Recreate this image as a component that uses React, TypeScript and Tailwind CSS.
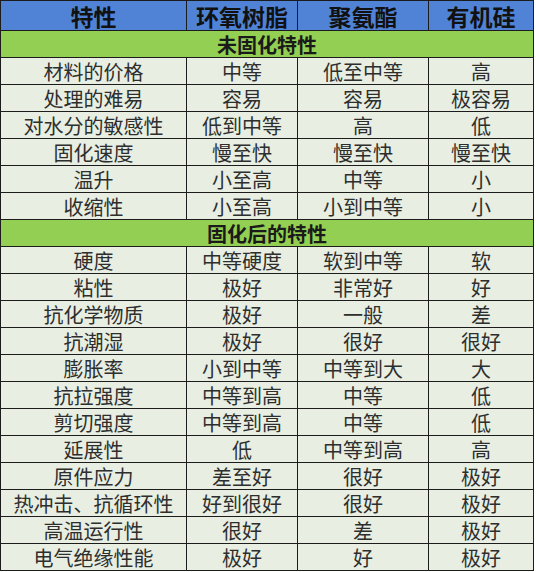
import React from 'react';

type Row = [string, string, string, string];

const uncured: Row[] = [
  ['材料的价格', '中等', '低至中等', '高'],
  ['处理的难易', '容易', '容易', '极容易'],
  ['对水分的敏感性', '低到中等', '高', '低'],
  ['固化速度', '慢至快', '慢至快', '慢至快'],
  ['温升', '小至高', '中等', '小'],
  ['收缩性', '小至高', '小到中等', '小'],
];

const cured: Row[] = [
  ['硬度', '中等硬度', '软到中等', '软'],
  ['粘性', '极好', '非常好', '好'],
  ['抗化学物质', '极好', '一般', '差'],
  ['抗潮湿', '极好', '很好', '很好'],
  ['膨胀率', '小到中等', '中等到大', '大'],
  ['抗拉强度', '中等到高', '中等', '低'],
  ['剪切强度', '中等到高', '中等', '低'],
  ['延展性', '低', '中等到高', '高'],
  ['原件应力', '差至好', '很好', '极好'],
  ['热冲击、抗循环性', '好到很好', '很好', '极好'],
  ['高温运行性', '很好', '差', '极好'],
  ['电气绝缘性能', '极好', '好', '极好'],
];

const cell = 'border border-[#1c1c1c] p-0 text-center align-middle';

function DataRows({ rows }: { rows: Row[] }) {
  return (
    <>
      {rows.map((r) => (
        <tr key={r[0]} className="h-[27px] bg-[#e8eee2] text-[20px] leading-[25px] text-[#2e2e2e]">
          {r.map((v, i) => (
            <td key={i} className={cell}>
              {v}
            </td>
          ))}
        </tr>
      ))}
    </>
  );
}

function Section({ title }: { title: string }) {
  return (
    <tr className="h-[27px] bg-[#93cf52] text-[20px] font-bold leading-[25px] text-[#1a1a1a]">
      <td colSpan={4} className={cell}>
        {title}
      </td>
    </tr>
  );
}

export default function App() {
  return (
    <div className="h-[572px] w-[536px] bg-white font-['Noto_Sans_CJK_SC','Noto_Sans',sans-serif]">
      <table className="w-[533px] table-fixed border-collapse border border-[#1c1c1c]">
        <colgroup>
          <col className="w-[186px]" />
          <col className="w-[111px]" />
          <col className="w-[131px]" />
          <col className="w-[105px]" />
        </colgroup>
        <thead>
          <tr className="h-[30px] bg-[#5083d5] text-[23px] font-bold leading-[28px] text-[#111]">
            <th className={cell}>特性</th>
            <th className={cell}>环氧树脂</th>
            <th className={cell}>聚氨酯</th>
            <th className={cell}>有机硅</th>
          </tr>
        </thead>
        <tbody>
          <Section title="未固化特性" />
          <DataRows rows={uncured} />
          <Section title="固化后的特性" />
          <DataRows rows={cured} />
        </tbody>
      </table>
    </div>
  );
}
